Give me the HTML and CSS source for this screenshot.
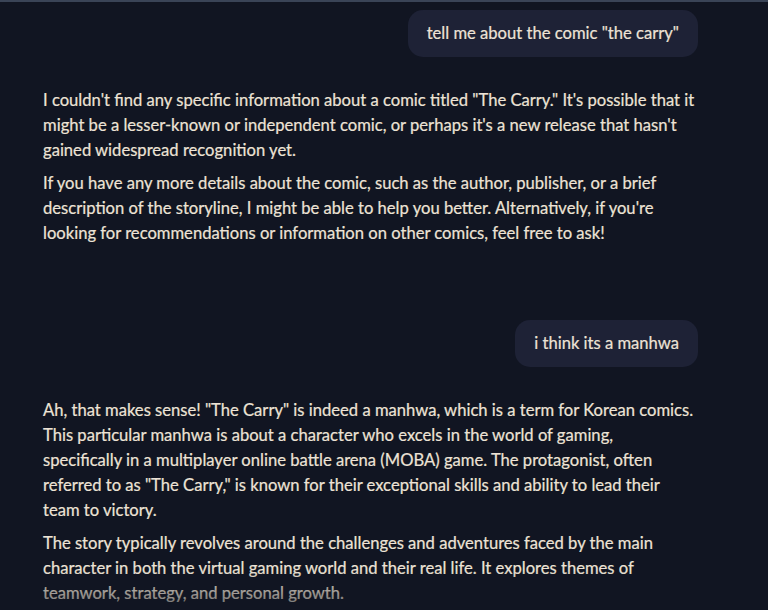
FILE: index.html
```html
<!DOCTYPE html>
<html>
<head>
<meta charset="utf-8">
<link rel="stylesheet" href="styles.css">
</head>
<body>
<div class="page">
  <div class="chat">
    <div class="user-row"><div class="bubble">tell me about the comic "the carry"</div></div>
    <div class="reply">
      <p>I couldn't find any specific information about a comic titled "The Carry." It's possible that it might be a lesser-known or independent comic, or perhaps it's a new release that hasn't gained widespread recognition yet.</p>
      <p>If you have any more details about the comic, such as the author, publisher, or a brief description of the storyline, I might be able to help you better. Alternatively, if you're looking for recommendations or information on other comics, feel free to ask!</p>
    </div>
    <div class="user-row second"><div class="bubble">i think its a manhwa</div></div>
    <div class="reply">
      <p>Ah, that makes sense! "The Carry" is indeed a manhwa, which is a term for Korean comics. This particular manhwa is about a character who excels in the world of gaming, specifically in a multiplayer online battle arena (MOBA) game. The protagonist, often referred to as "The Carry," is known for their exceptional skills and ability to lead their team to victory.</p>
      <p>The story typically revolves around the challenges and adventures faced by the main character in both the virtual gaming world and their real life. It explores themes of teamwork, strategy, and personal growth.</p>
    </div>
  </div>
  <div class="fade"></div>
</div>
</body>
</html>
```
FILE: styles.css
```css
html, body {
  margin: 0;
  padding: 0;
  background: #111522;
  height: 100%;
  overflow: hidden;
}
.page {
  position: relative;
  height: 610px;
  border-top: 2px solid #3a4457;
  box-sizing: border-box;
  font-family: Lato, "Noto Sans", sans-serif;
  font-size: 16.6px;
  color: #ede3d6;
  -webkit-text-stroke: 0.2px #ede3d6;
}
.chat {
  width: 662px;
  padding: 8px 0 0 43px;
}
.user-row {
  display: flex;
  justify-content: flex-end;
  margin-right: 7px;
}
.user-row.second {
  margin-top: 74px;
}
.bubble {
  background: #1e2236;
  border-radius: 15px;
  padding: 12px 19px;
  line-height: 23px;
}
.reply {
  margin-top: 31px;
  width: 653px;
}
.reply p {
  margin: 0 0 8px 0;
  line-height: 25px;
}
.fade {
  position: absolute;
  left: 0;
  right: 0;
  bottom: 0;
  height: 40px;
  background: linear-gradient(to bottom, rgba(17,21,34,0), rgba(17,21,34,0.6));
  pointer-events: none;
}
```
